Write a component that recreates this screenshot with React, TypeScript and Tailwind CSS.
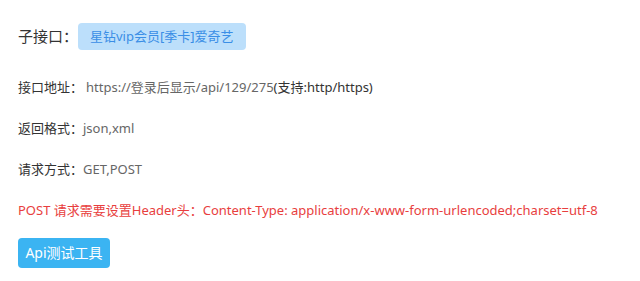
import React from "react";

export default function App() {
  return (
    <div
      className="w-[640px] h-[281px] bg-white pl-[18px] pt-[23px] text-[#333]"
      style={{ fontFamily: '"Noto Sans", "Noto Sans CJK SC", sans-serif' }}
    >
      <div className="flex items-center h-[27px]">
        <span className="text-[15px] leading-[27px] text-[#333]">子接口：</span>
        <span className="h-[27px] px-[12px] rounded-[4px] bg-[#bcdffb] text-[#3a8ee6] text-[13px] leading-[27px]">
          星钻vip会员[季卡]爱奇艺
        </span>
      </div>
      <div className="mt-[27px] text-[13px] leading-[20px]">
        <span className="text-[#333]">接口地址：</span>
        <span className="ml-[3px] text-[#666]">https://登录后显示/api/129/275</span>
        <span className="text-[#333]">(支持:http/https)</span>
      </div>
      <div className="mt-[21px] text-[13px] leading-[20px]">
        <span className="text-[#333]">返回格式：</span>
        <span className="text-[#666]">json,xml</span>
      </div>
      <div className="mt-[21px] text-[13px] leading-[20px]">
        <span className="text-[#333]">请求方式：</span>
        <span className="text-[#666]">GET,POST</span>
      </div>
      <div className="mt-[21px] text-[13px] leading-[20px] text-[#e83e3e]">
        POST 请求需要设置Header头：Content-Type: application/x-www-form-urlencoded;charset=utf-8
      </div>
      <button className="mt-[18px] h-[30px] w-[92px] rounded-[4px] bg-[#3bb4f2] text-white text-[14px] leading-[30px] text-center">
        Api测试工具
      </button>
    </div>
  );
}
